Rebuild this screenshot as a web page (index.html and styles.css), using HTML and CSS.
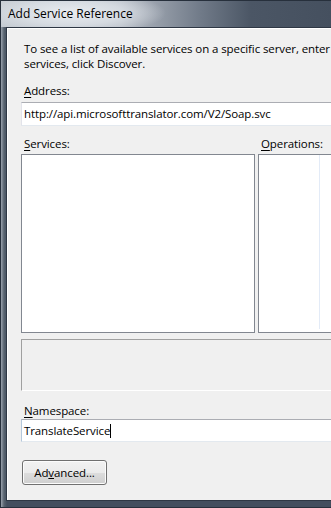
FILE: index.html
```html
<!DOCTYPE html>
<html>
<head>
  <title>Add Service Reference</title>
  <link rel="stylesheet" href="styles.css">
</head>
<body>
  <div class="window">
    <div class="titlebar">
      <span class="title">Add Service Reference</span>
    </div>
    <div class="client">
      <p class="intro">To see a list of available services on a specific server, enter<br>services, click Discover.</p>

      <label class="field-label"><u>A</u>ddress:</label>
      <div class="textbox address-box">http://api.microsofttranslator.com/V2/Soap.svc</div>

      <div class="lists">
        <div class="list-col services">
          <label class="field-label"><u>S</u>ervices:</label>
          <div class="listbox"></div>
        </div>
        <div class="list-col operations">
          <label class="field-label"><u>O</u>perations:</label>
          <div class="listbox">
            <div class="col-line"></div>
          </div>
        </div>
      </div>

      <div class="description"></div>

      <label class="field-label ns-label"><u>N</u>amespace:</label>
      <div class="textbox ns-box">TranslateService<span class="caret"></span></div>

      <button class="btn">Ad<u>v</u>anced...</button>
    </div>
  </div>
</body>
</html>
```

FILE: styles.css
```css
:root {
  --face: #f0f0f0;
  --list-border: #828790;
  --frame: #434e5e;
  --frame-dark: #27303c;
  --text: #000;
}

html, body {
  margin: 0;
  padding: 0;
  overflow: hidden;
}

body {
  width: 331px;
  height: 508px;
  background: var(--frame);
  font-family: 'Open Sans', 'Noto Sans', sans-serif;
  font-size: 11.5px;
  letter-spacing: -0.1px;
  color: var(--text);
}

.window {
  width: 420px;
  height: 508px;
  box-sizing: border-box;
  border: 1px solid var(--frame-dark);
  border-right: none;
  background: linear-gradient(to right, #9aa2ad 0px, #58636f 3px, #434e5e 6px);
  display: flex;
  flex-direction: column;
  padding: 0 0 6px 5px;
}

.titlebar {
  height: 26px;
  margin-left: -5px;
  padding-left: 7px;
  display: flex;
  align-items: center;
  background:
    radial-gradient(ellipse 95px 22px at 70px 12px, rgba(235, 238, 242, 0.95) 0%, rgba(220, 225, 231, 0.8) 55%, rgba(220, 225, 231, 0) 100%),
    linear-gradient(to right, #c3c9d0 0px, #b6bcc5 120px, #707a88 200px, #4b5665 250px, #45505f 331px);
}

.title {
  font-size: 12px;
  letter-spacing: 0;
  color: #000;
  margin-top: -1px;
}

.client {
  flex: 1;
  background: var(--face);
  border: 1px solid #2e3744;
  box-shadow: inset 1px 1px 0 #fff;
  padding: 0 0 0 14px;
  display: flex;
  flex-direction: column;
  align-items: flex-start;
}

.intro {
  margin: 13px 0 0 3px;
  line-height: 15px;
  white-space: nowrap;
}

.field-label {
  display: block;
  margin-left: 3px;
  line-height: 15px;
}

.field-label u {
  text-decoration-thickness: 1px;
  text-underline-offset: 2px;
}

.intro + .field-label {
  margin-top: 12px;
}

.textbox {
  width: 420px;
  height: 23px;
  box-sizing: border-box;
  margin-top: 4px;
  background: #fff;
  border: 1px solid #e2e3ea;
  border-top-color: #abadb3;
  border-bottom-color: #e3e9ef;
  padding: 0 0 0 2px;
  line-height: 21px;
  white-space: nowrap;
}

.address-box {
  height: 24px;
  line-height: 22px;
}

.lists {
  display: flex;
  gap: 3px;
  margin-top: 10px;
}

.services .listbox {
  width: 234px;
}

.operations .listbox {
  width: 120px;
  position: relative;
}

.list-col {
  display: flex;
  flex-direction: column;
}

.listbox {
  height: 179px;
  box-sizing: border-box;
  margin-top: 3px;
  background: #fff;
  border: 1px solid var(--list-border);
}

.col-line {
  position: absolute;
  left: 60px;
  top: 0;
  bottom: 3px;
  width: 1px;
  background: #e3ebf7;
}

.description {
  width: 420px;
  height: 52px;
  box-sizing: border-box;
  margin-top: 6px;
  border: 1px solid #a0a0a0;
  border-right-color: #fff;
  border-bottom-color: #fff;
}

.ns-label {
  margin-top: 12px;
}

.ns-box {
  margin-top: 1px;
  border-top-color: #abadb3;
  border-left-color: #b5c8db;
}

.caret {
  display: inline-block;
  width: 1px;
  height: 14px;
  background: #000;
  vertical-align: -3px;
}

.btn {
  margin: 18px 0 0 1px;
  width: 85px;
  height: 25px;
  box-sizing: border-box;
  border: 1px solid #707070;
  border-radius: 3px;
  box-shadow: inset 0 0 0 1px #fcfcfc;
  background: linear-gradient(to bottom, #f2f2f2 0%, #ebebeb 50%, #dddddd 51%, #cfcfcf 100%);
  font-family: inherit;
  font-size: 11.5px;
  letter-spacing: -0.1px;
  color: #000;
  padding: 0 0 1px 0;
}
```
